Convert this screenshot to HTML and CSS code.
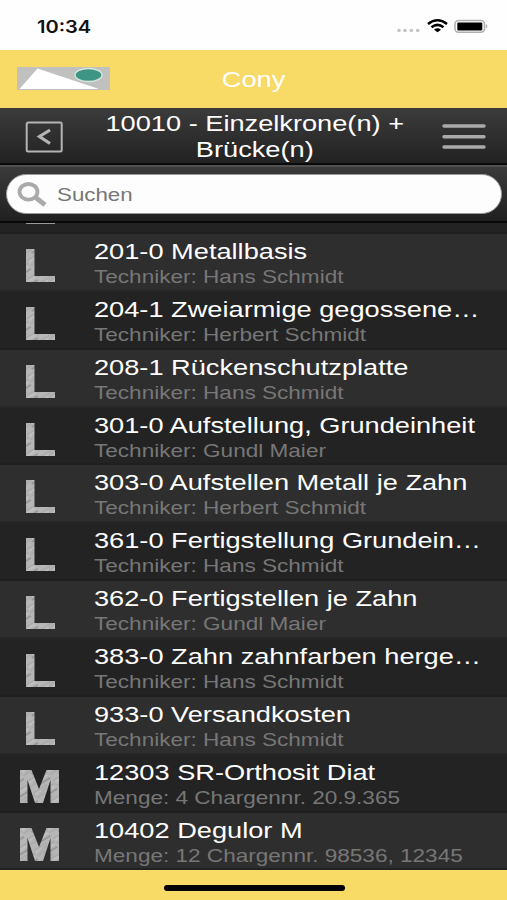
FILE: index.html
```html
<!DOCTYPE html>
<html lang="de">
<head>
<meta charset="utf-8">
<title>Cony</title>
<link rel="stylesheet" href="styles.css">
</head>
<body>
<svg class="defs" width="0" height="0" aria-hidden="true">
  <defs>
    <pattern id="brushed" width="23" height="13" patternUnits="userSpaceOnUse" patternTransform="rotate(-32)">
      <rect width="23" height="13" fill="#b6b6b6"/>
      <path d="M0 2H15M4 5H23M0 8H10" stroke="#a3a3a3"/>
      <path d="M8 11H22" stroke="#7c7c7c"/>
      <path d="M12 7H21M1 4H8" stroke="#cacaca"/>
    </pattern>
    <symbol id="icon-l" viewBox="0 0 42 36"><path d="M7 1h8.500v27H36V34H7z" fill="url(#brushed)"/></symbol>
    <symbol id="icon-m" viewBox="0 0 42 36"><path d="M1 1h11.500l7.500 19 7.500-19H40v33h-8.500V11L24 34h-8L8.500 11v23H1z" fill="url(#brushed)"/></symbol>
  </defs>
</svg>
<div class="phone">
  <div class="status">
    <span class="clock">10:34</span>
    <svg class="indicators" width="94" height="18" viewBox="0 0 94 18">
      <g fill="#c4c4c4"><circle cx="3" cy="12.500" r="1.800"/><circle cx="9" cy="12.500" r="1.800"/><circle cx="15.300" cy="12.500" r="1.800"/><circle cx="21.700" cy="12.500" r="1.800"/></g>
      <g fill="none" stroke="#000" stroke-width="2.500"><path d="M32 6Q41.500 -1.500 51 6"/><path d="M35.500 9.300Q41.500 4.500 47.500 9.300"/></g>
      <path d="M38 11.700Q41.500 9 45 11.700L41.500 14.300z"/>
      <rect x="59" y="2.500" width="29.500" height="11.800" rx="3.500" fill="#fff" stroke="#b0b0b0" stroke-width="1.600"/>
      <rect x="61.300" y="4.400" width="25" height="8" rx="1"/>
      <path d="M90 6q3 2.300 0 4.600z" fill="#b0b0b0"/>
    </svg>
  </div>
  <header class="brand">
    <svg class="logo" width="93" height="23" viewBox="0 0 93 23">
      <rect width="93" height="23" fill="#c0c0be"/>
      <path d="M2.500 22L20.500 1.500 82 22z" fill="#fff"/>
      <ellipse cx="71.500" cy="8" rx="13.500" ry="6.500" fill="#3f9585" stroke="#d9e6df" stroke-width="1.300"/>
    </svg>
    <h1><span>Cony</span></h1>
  </header>
  <nav class="toolbar">
    <svg class="back" width="38" height="32" viewBox="0 0 38 32" fill="none" stroke="#b4b4b4">
      <rect x="1.700" y="1.500" width="35" height="29" rx="1.500" stroke-width="2"/>
      <path d="M25 9L14.500 15.500l10.500 7" stroke-width="3.200"/>
    </svg>
    <h2><span>10010 - Einzelkrone(n) +</span><span>Brücke(n)</span></h2>
    <svg class="menu" width="44" height="26" viewBox="0 0 44 26" stroke="#aaa" stroke-width="3.400" stroke-linecap="round"><path d="M2 2H42M2 12.700H42M2 23H42"/></svg>
  </nav>
  <div class="searchbar">
    <label class="search">
      <svg width="30" height="26" viewBox="0 0 30 26" fill="none" stroke="#aaa"><ellipse cx="11.500" cy="9.800" rx="9" ry="7.800" stroke-width="3.800"/><path d="M18 15L28 22.800" stroke-width="4.800"/></svg>
      <span>Suchen</span>
    </label>
  </div>
  <ul class="list">
    <li class="peek"><i></i></li>
    <li><svg><use href="#icon-l"/></svg><div><b>201-0 Metallbasis</b><small>Techniker: Hans Schmidt</small></div></li>
    <li><svg><use href="#icon-l"/></svg><div><b>204-1 Zweiarmige gegossene…</b><small>Techniker: Herbert Schmidt</small></div></li>
    <li><svg><use href="#icon-l"/></svg><div><b>208-1 Rückenschutzplatte</b><small>Techniker: Hans Schmidt</small></div></li>
    <li><svg><use href="#icon-l"/></svg><div><b>301-0 Aufstellung, Grundeinheit</b><small>Techniker: Gundl Maier</small></div></li>
    <li><svg><use href="#icon-l"/></svg><div><b>303-0 Aufstellen Metall je Zahn</b><small>Techniker: Herbert Schmidt</small></div></li>
    <li><svg><use href="#icon-l"/></svg><div><b>361-0 Fertigstellung Grundein…</b><small>Techniker: Hans Schmidt</small></div></li>
    <li><svg><use href="#icon-l"/></svg><div><b>362-0 Fertigstellen je Zahn</b><small>Techniker: Gundl Maier</small></div></li>
    <li><svg><use href="#icon-l"/></svg><div><b>383-0 Zahn zahnfarben herge…</b><small>Techniker: Hans Schmidt</small></div></li>
    <li><svg><use href="#icon-l"/></svg><div><b>933-0 Versandkosten</b><small>Techniker: Hans Schmidt</small></div></li>
    <li><svg><use href="#icon-m"/></svg><div><b>12303 SR-Orthosit Diat</b><small>Menge: 4 Chargennr. 20.9.365</small></div></li>
    <li><svg><use href="#icon-m"/></svg><div><b>10402 Degulor M</b><small>Menge: 12 Chargennr. 98536, 12345</small></div></li>
  </ul>
  <footer><i></i></footer>
</div>
</body>
</html>
```
FILE: styles.css
```css
* { box-sizing: border-box; margin: 0; padding: 0; }
body { background: #252525; font-family: "Liberation Sans", Arial, sans-serif; }
.defs { display: block; height: 0; }
.phone { width: 507px; height: 900px; overflow: hidden; display: flex; flex-direction: column; }
.phone > * { flex: none; }

.status { height: 49.500px; background: #fefefe; display: flex; justify-content: space-between; padding: 18px 17px 0 37px; }
.clock { font: 600 17px/18px Inter, "Liberation Sans", sans-serif; color: #111; transform: scaleX(1.180); transform-origin: 0 0; }

.brand { height: 58px; background: #f8da66; display: grid; grid-template-columns: 93px 1fr 93px; padding: 17px 17px 0; }
.brand h1 { font-weight: 400; font-size: 22px; line-height: 25px; color: #fff; text-align: center; }
h1 span, h2 span { display: block; transform: scaleX(1.236); }

.toolbar { height: 57.500px; background: linear-gradient(#3b3b3b, #222); border-top: 1px solid #3c3c3c; border-bottom: 2px solid #090909; display: flex; justify-content: space-between; padding: 0 21px 0 25px; }
.back { margin-top: 12px; }
.menu { margin-top: 15px; }
.toolbar h2 { font-weight: 400; font-size: 22px; line-height: 26.500px; color: #fff; text-align: center; margin-top: 2px; margin-left: 4px; }

.searchbar { height: 58px; border-top: 2px solid #515151; border-bottom: 2px solid #080808; background: linear-gradient(#3a3a3a, #202020); padding: 7px 5px 0 6px; }
.search { height: 40px; border-radius: 22px; background: #fdfdfd; border: 1px solid #999; display: flex; padding: 7px 0 0 10px; }
.search span { font-size: 18.300px; line-height: 25px; color: #777; margin-left: 10px; transform: scaleX(1.220); transform-origin: 0 0; }

.list { height: 647px; list-style: none; background: #222; overflow: hidden; }
.list li { height: 57.860px; display: flex; background: #2e2e2e; border-top: 2px solid #1f1f1f; padding-left: 19px; }
.list li:nth-child(odd) { background: #232323; border-top-color: #262626; }
.list li.peek { height: 9px; padding-left: 26px; border-top: 0; }
.peek i { width: 29px; height: 1px; background: #999; }
.list svg { width: 42px; height: 36px; margin-top: 14px; }
.list div { margin-left: 33px; width: 320px; transform: scaleX(1.236); transform-origin: 0 0; white-space: nowrap; }
.list b { display: block; font-weight: 400; font-size: 22px; line-height: 26px; margin-top: 5px; color: #fff; }
.list small { display: block; font-size: 18.250px; line-height: 23px; margin-top: 0; color: #777; }

footer { height: 30px; background: #f8da66; padding-top: 15px; }
footer i { display: block; width: 181px; height: 6px; border-radius: 3px; background: #000; margin-left: 164px; }
```
